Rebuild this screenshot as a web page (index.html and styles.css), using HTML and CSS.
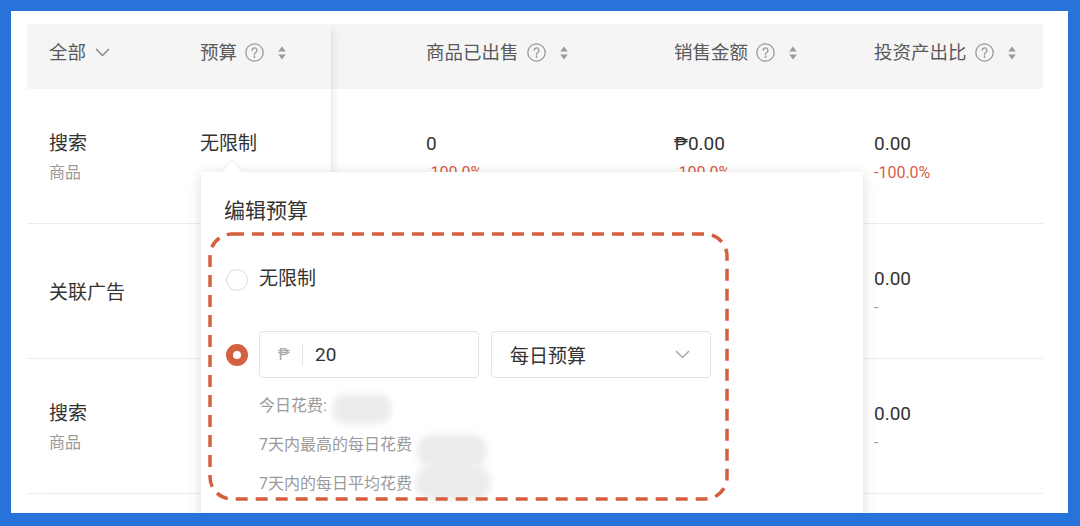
FILE: index.html
```html
<!DOCTYPE html>
<html lang="zh">
<head>
<meta charset="utf-8">
<link rel="stylesheet" href="styles.css">
</head>
<body>
<div class="frame">
  <div class="table">
    <div class="fixed">
      <div class="row head">
        <div class="hcell c1"><span>全部</span>
          <svg class="chev" width="15" height="9" viewBox="0 0 15 9"><polyline points="1,1 7.5,7.5 14,1" fill="none" stroke="#888" stroke-width="1.5"/></svg>
        </div>
        <div class="hcell c2"><span>预算</span>
          <svg class="qi" width="19" height="19" viewBox="0 0 19 19"><circle cx="9.5" cy="9.5" r="8.7" fill="none" stroke="#9a9a9a" stroke-width="1.3"/><path d="M7.1 7.4a2.4 2.4 0 1 1 3.5 2.1c-.8.4-1.1.9-1.1 1.7v.7" fill="none" stroke="#9a9a9a" stroke-width="1.3" stroke-linecap="round"/><circle cx="9.5" cy="14" r=".9" fill="#9a9a9a"/></svg>
          <svg class="sort" width="8" height="14" viewBox="0 0 8 14"><path d="M4 0.5L7.8 5.5H0.2Z M4 13.5L7.8 8.5H0.2Z" fill="#9a9a9a"/></svg>
        </div>
      </div>
      <div class="row body">
        <div class="cell c1"><div class="main">搜索</div><div class="sub">商品</div></div>
        <div class="cell c2"><div class="main">无限制</div><div class="sub">&nbsp;</div></div>
      </div>
      <div class="row body">
        <div class="cell c1"><div class="main">关联广告</div></div>
        <div class="cell c2"><div class="main">无限制</div></div>
      </div>
      <div class="row body">
        <div class="cell c1"><div class="main">搜索</div><div class="sub">商品</div></div>
        <div class="cell c2"><div class="main">无限制</div><div class="sub">&nbsp;</div></div>
      </div>
    </div>
    <div class="scroll">
      <div class="row head">
        <div class="hcell c3"><span>商品已出售</span>
          <svg class="qi" width="19" height="19" viewBox="0 0 19 19"><circle cx="9.5" cy="9.5" r="8.7" fill="none" stroke="#9a9a9a" stroke-width="1.3"/><path d="M7.1 7.4a2.4 2.4 0 1 1 3.5 2.1c-.8.4-1.1.9-1.1 1.7v.7" fill="none" stroke="#9a9a9a" stroke-width="1.3" stroke-linecap="round"/><circle cx="9.5" cy="14" r=".9" fill="#9a9a9a"/></svg>
          <svg class="sort" width="8" height="14" viewBox="0 0 8 14"><path d="M4 0.5L7.8 5.5H0.2Z M4 13.5L7.8 8.5H0.2Z" fill="#9a9a9a"/></svg>
        </div>
        <div class="hcell c4"><span>销售金额</span>
          <svg class="qi" width="19" height="19" viewBox="0 0 19 19"><circle cx="9.5" cy="9.5" r="8.7" fill="none" stroke="#9a9a9a" stroke-width="1.3"/><path d="M7.1 7.4a2.4 2.4 0 1 1 3.5 2.1c-.8.4-1.1.9-1.1 1.7v.7" fill="none" stroke="#9a9a9a" stroke-width="1.3" stroke-linecap="round"/><circle cx="9.5" cy="14" r=".9" fill="#9a9a9a"/></svg>
          <svg class="sort" width="8" height="14" viewBox="0 0 8 14"><path d="M4 0.5L7.8 5.5H0.2Z M4 13.5L7.8 8.5H0.2Z" fill="#9a9a9a"/></svg>
        </div>
        <div class="hcell c5"><span>投资产出比</span>
          <svg class="qi" width="19" height="19" viewBox="0 0 19 19"><circle cx="9.5" cy="9.5" r="8.7" fill="none" stroke="#9a9a9a" stroke-width="1.3"/><path d="M7.1 7.4a2.4 2.4 0 1 1 3.5 2.1c-.8.4-1.1.9-1.1 1.7v.7" fill="none" stroke="#9a9a9a" stroke-width="1.3" stroke-linecap="round"/><circle cx="9.5" cy="14" r=".9" fill="#9a9a9a"/></svg>
          <svg class="sort" width="8" height="14" viewBox="0 0 8 14"><path d="M4 0.5L7.8 5.5H0.2Z M4 13.5L7.8 8.5H0.2Z" fill="#9a9a9a"/></svg>
        </div>
      </div>
      <div class="row body">
        <div class="cell c3"><div class="main">0</div><div class="sub red">-100.0%</div></div>
        <div class="cell c4"><div class="main">₱0.00</div><div class="sub red">-100.0%</div></div>
        <div class="cell c5"><div class="main">0.00</div><div class="sub red">-100.0%</div></div>
      </div>
      <div class="row body">
        <div class="cell c3"><div class="main">0</div><div class="sub">-</div></div>
        <div class="cell c4"><div class="main">₱0.00</div><div class="sub">-</div></div>
        <div class="cell c5"><div class="main">0.00</div><div class="sub">-</div></div>
      </div>
      <div class="row body">
        <div class="cell c3"><div class="main">0</div><div class="sub">-</div></div>
        <div class="cell c4"><div class="main">₱0.00</div><div class="sub">-</div></div>
        <div class="cell c5"><div class="main">0.00</div><div class="sub">-</div></div>
      </div>
    </div>
  </div>

  <div class="pop">
    <div class="pop-title">编辑预算</div>
    <div class="opt opt1">
      <span class="radio"></span><span class="opt-label">无限制</span>
    </div>
    <div class="opt opt2">
      <span class="radio on"></span>
      <div class="input"><span class="cur">₱</span><span class="sep"></span><span class="val">20</span></div>
      <div class="select"><span>每日预算</span>
        <svg width="15" height="9" viewBox="0 0 15 9"><polyline points="1,1 7.5,7.5 14,1" fill="none" stroke="#aaa" stroke-width="1.5"/></svg>
      </div>
    </div>
    <div class="info">
      <div>今日花费:</div>
      <div>7天内最高的每日花费</div>
      <div>7天内的每日平均花费</div>
    </div>
    <span class="blob b1"></span>
    <span class="blob b2"></span>
    <span class="blob b3"></span>
    <svg class="mark" width="521" height="269" viewBox="0 0 521 269"><rect x="2" y="2" width="517" height="265" rx="22" ry="22" fill="none" stroke="#d4603f" stroke-width="3.5" stroke-dasharray="12 8"/></svg>
  </div>
</div>
</body>
</html>
```

FILE: styles.css
```css
html, body {
  margin: 0;
  padding: 0;
}
body {
  background: #2773da;
  font-family: Roboto, "Noto Sans CJK SC", "Noto Sans", sans-serif;
  width: 1080px;
  height: 526px;
  overflow: hidden;
}
.frame {
  position: relative;
  margin: 11px 12px 13px 11px;
  width: 1057px;
  height: 502px;
  background: #fff;
  overflow: hidden;
  padding: 13px 0 0 16px;
  box-sizing: border-box;
}
.table {
  display: flex;
  width: 1016px;
}
.fixed {
  display: flex;
  flex-direction: column;
  width: 304px;
  position: relative;
  z-index: 1;
  background: #fff;
  box-shadow: 7px 0 8px -5px rgba(0, 0, 0, 0.10);
}
.scroll {
  flex: 1;
  display: flex;
  flex-direction: column;
}
.row {
  display: flex;
}
.head {
  height: 65px;
  background: #f5f5f5;
}
.body {
  height: 135px;
  border-bottom: 1px solid #ececec;
  box-sizing: border-box;
}
.c1 { width: 151px; }
.c2 { width: 153px; }
.c3 { width: 321px; padding-left: 95px !important; }
.c4 { width: 200px; }
.c5 { width: 191px; }
.hcell {
  display: flex;
  align-items: center;
  padding: 0 0 8px 22px;
  box-sizing: border-box;
  color: #5a5a5a;
  font-size: 18.5px;
  line-height: 26px;
  white-space: nowrap;
}
.chev { margin-left: 9px; }
.qi { margin-left: 8px; flex: none; }
.sort { margin-left: 14px; flex: none; }
.cell {
  display: flex;
  flex-direction: column;
  justify-content: center;
  padding: 3px 0 0 22px;
  box-sizing: border-box;
  white-space: nowrap;
}
.main {
  font-size: 19px;
  line-height: 29px;
  color: #333;
}
.sub {
  font-size: 16px;
  line-height: 29px;
  color: #9a9a9a;
}
.sub.red {
  color: #d9604c;
}

/* popover */
.pop {
  position: absolute;
  left: 190px;
  top: 161px;
  width: 662px;
  height: 400px;
  background: #fff;
  border-radius: 3px;
  box-shadow: 0 2px 14px rgba(0, 0, 0, 0.14);
  padding: 26px 23px 0;
  box-sizing: border-box;
  z-index: 5;
}
.pop::before {
  content: "";
  position: absolute;
  left: 24px;
  top: -7px;
  width: 14px;
  height: 14px;
  background: #fff;
  transform: rotate(45deg);
  box-shadow: -2px -2px 4px rgba(0, 0, 0, 0.05);
}
.pop-title {
  font-size: 21px;
  line-height: 26px;
  color: #333;
}
.opt {
  display: flex;
  align-items: center;
}
.opt1 {
  margin-top: 36px;
  height: 40px;
}
.opt2 {
  margin-top: 31px;
  height: 47px;
}
.radio {
  width: 22px;
  height: 22px;
  border-radius: 50%;
  border: 1px solid #dcdcdc;
  box-sizing: border-box;
  margin-left: 2px;
  margin-right: 11px;
  flex: none;
  background: #fff;
}
.radio.on {
  border: 7px solid #d4603f;
}
.opt-label {
  font-size: 19px;
  line-height: 26px;
  color: #333;
  margin-top: -3px;
}
.input, .select {
  width: 220px;
  height: 47px;
  border: 1px solid #e3e3e3;
  border-radius: 4px;
  box-sizing: border-box;
  display: flex;
  align-items: center;
  padding-left: 18px;
  flex: none;
}
.cur {
  font-size: 16px;
  color: #aaa;
  width: 11px;
}
.sep {
  width: 1px;
  height: 22px;
  background: #e5e5e5;
  margin: 0 12px 0 13px;
}
.val {
  font-size: 19px;
  color: #333;
}
.select {
  margin-left: 12px;
  justify-content: space-between;
  padding-right: 20px;
  font-size: 19px;
  color: #333;
}
.info {
  margin-top: 8px;
  padding-left: 35px;
  font-size: 16px;
  line-height: 39px;
  color: #9a9a9a;
}
.blob {
  position: absolute;
  background: #ececec;
  filter: blur(3px);
}
.b1 {
  left: 132px;
  top: 222px;
  width: 58px;
  height: 30px;
  border-radius: 12px;
}
.b2 {
  left: 216px;
  top: 262px;
  width: 70px;
  height: 34px;
  border-radius: 16px;
}
.b3 {
  left: 214px;
  top: 292px;
  width: 76px;
  height: 36px;
  border-radius: 18px;
}
.mark {
  position: absolute;
  left: 7px;
  top: 60px;
}
```
